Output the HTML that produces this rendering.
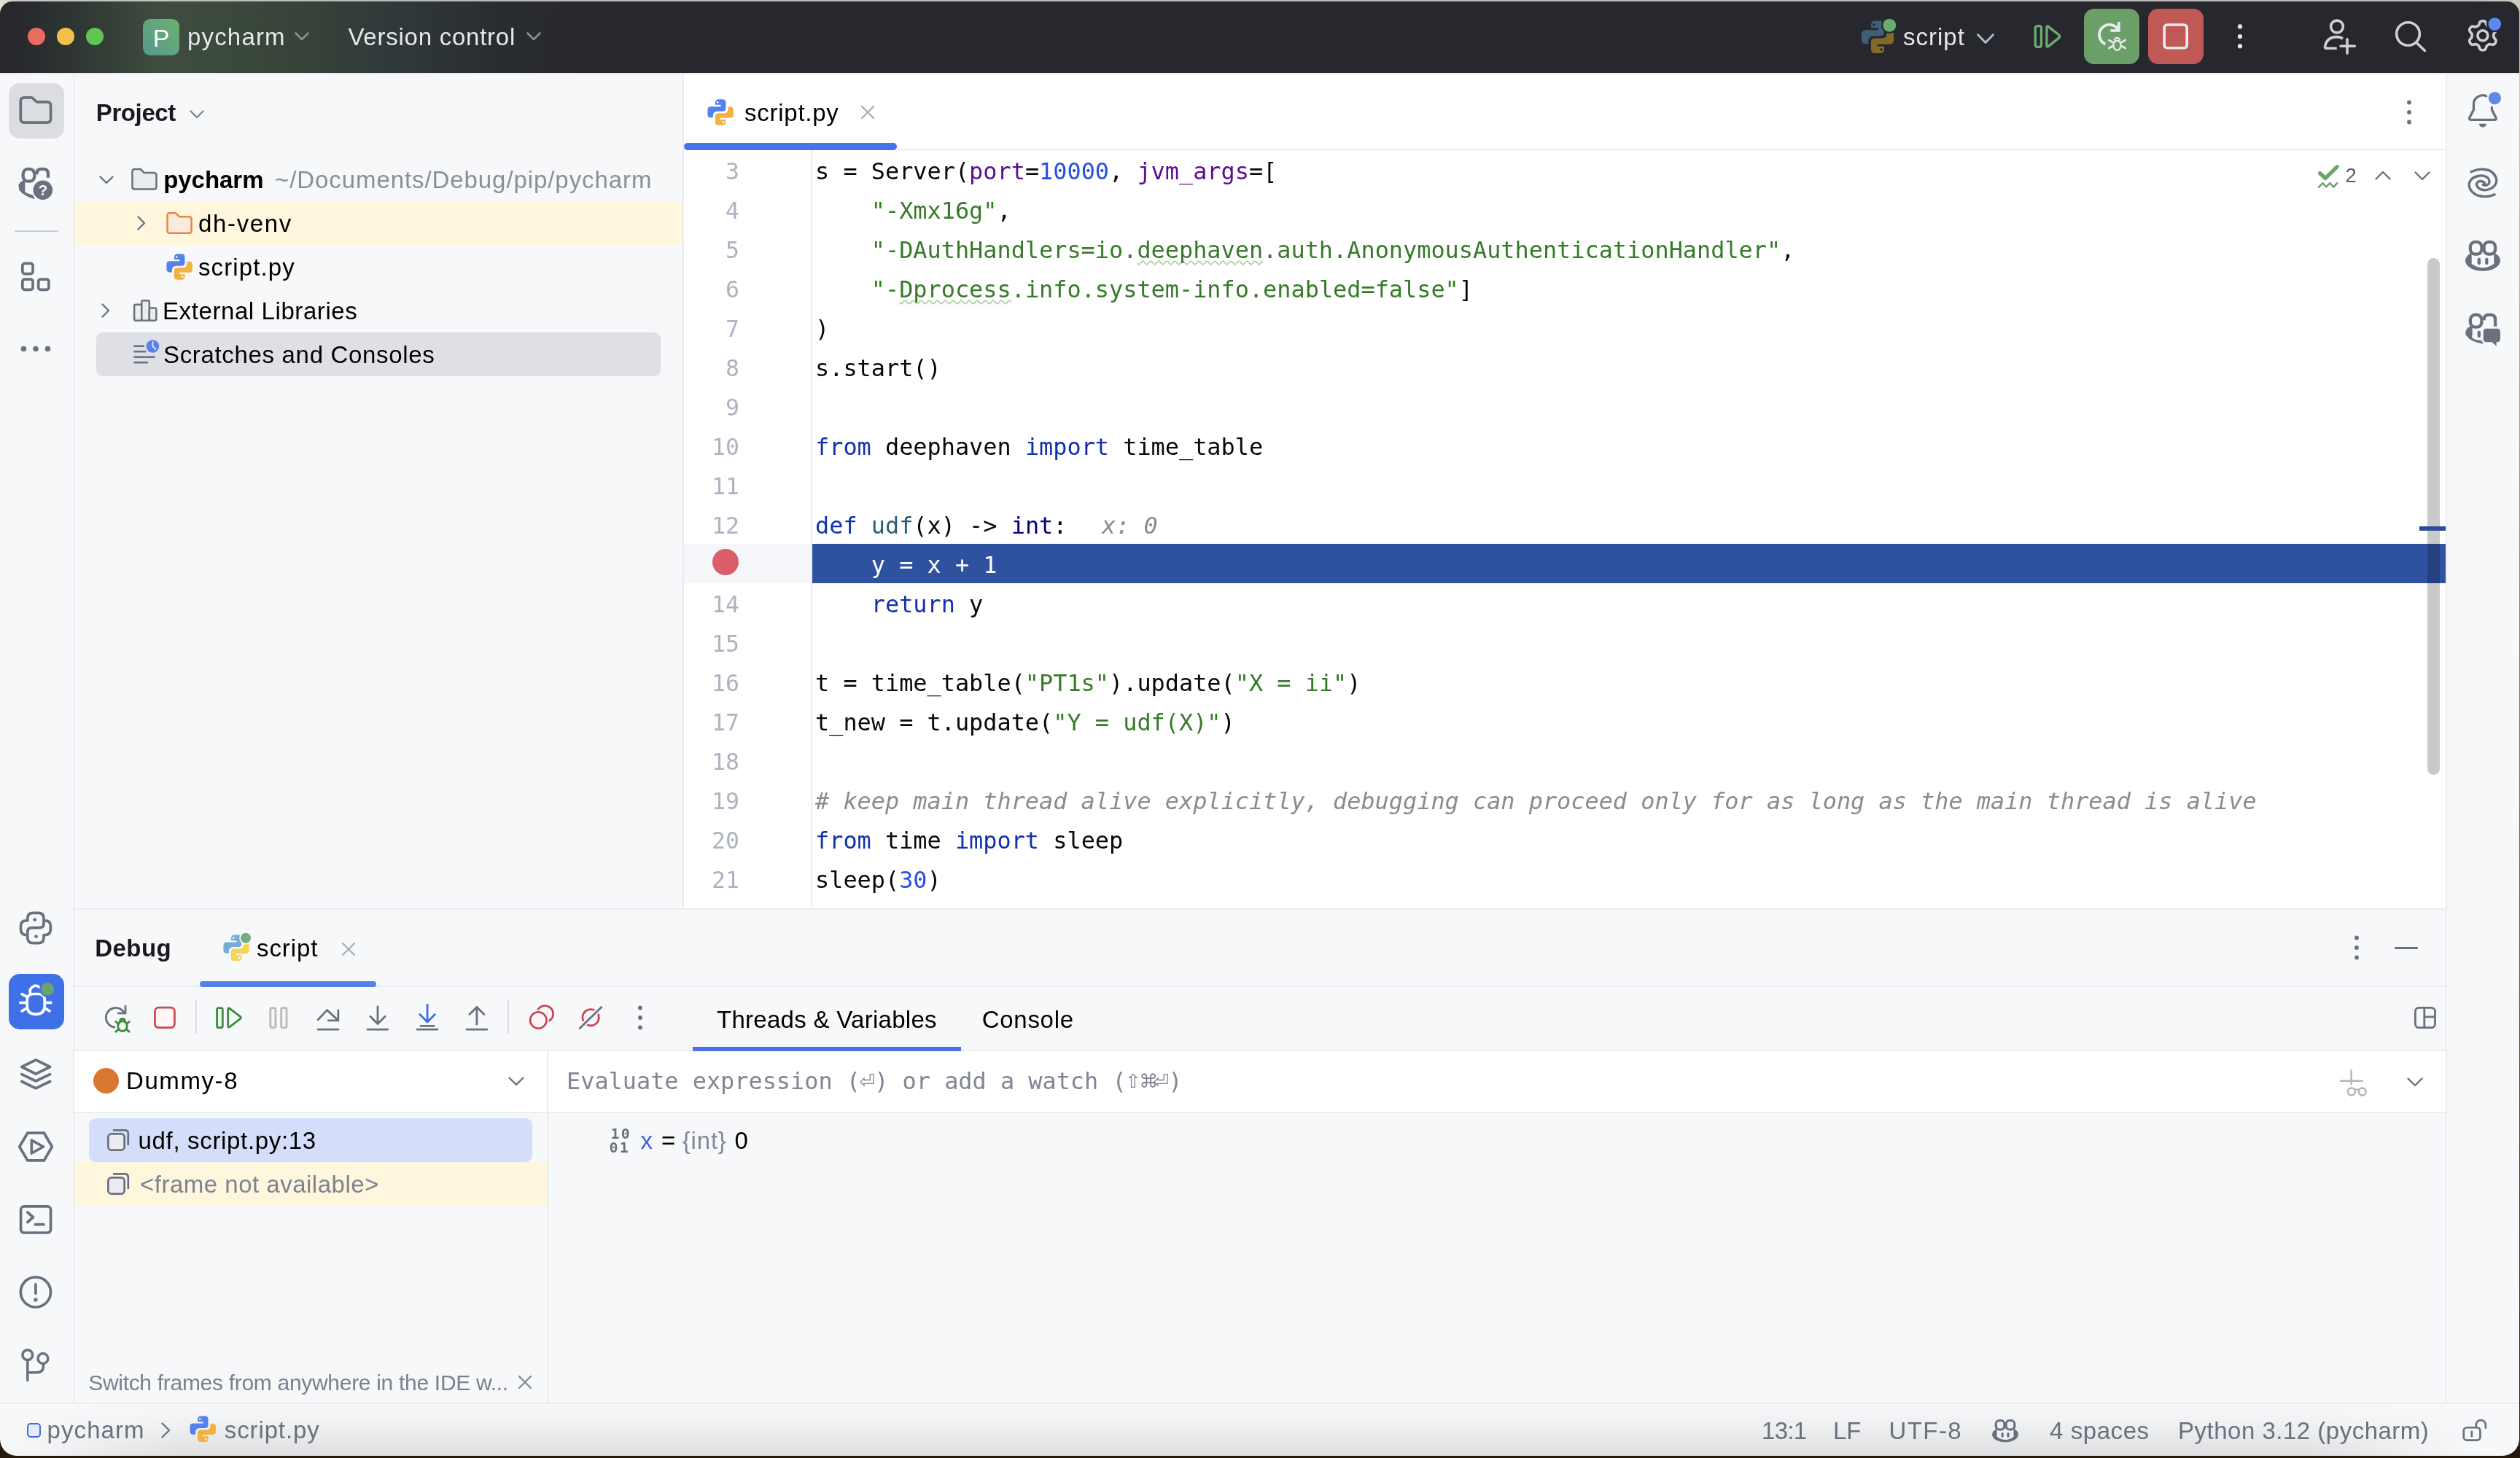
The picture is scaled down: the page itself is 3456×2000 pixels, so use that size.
<!DOCTYPE html>
<html lang="en">
<head>
<meta charset="utf-8">
<title>pycharm – script.py</title>
<style>
*{box-sizing:border-box;margin:0;padding:0}
html,body{width:3456px;height:2000px;overflow:hidden}
body{position:relative;font-family:"Liberation Sans",sans-serif;color:#000;
 background:linear-gradient(to bottom,rgba(42,29,16,0) 0,rgba(42,29,16,0) 60px,#2a1d10 1900px,#241a0e 2000px),linear-gradient(to right,#e6e4d8 0,#c6c6c4 30px,#b9b9b9 400px,#b9b9b9 3380px,#cfc8bd 3440px)}
.a{position:absolute}
.t{position:absolute;white-space:nowrap;line-height:44px;height:44px;font-size:32px;margin-top:1px}
.m{font-family:"DejaVu Sans Mono","Liberation Mono",monospace}
svg{position:absolute;overflow:visible}
#win{will-change:transform;position:absolute;left:0;top:0;width:3456px;height:2000px;background:#f7f8fa;clip-path:inset(2px 1px 3px 0 round 17px 17px 23px 23px)}
/* title bar */
#title{left:0;top:0;width:3456px;height:100px;background:linear-gradient(to right,#27282e 0,#27282e 20px,#2f3733 110px,#3e4c3f 215px,#3e4c3f 250px,#384439 400px,#30393a 540px,#2a2d30 680px,#27282e 800px,#27282e 100%)}
.hl{background:#ebecf0}
/* code */
.ln{position:absolute;left:938px;width:76px;text-align:right;color:#aeb3c2;font-size:31.5px;line-height:54px;height:54px;margin-top:2px}
.cl{position:absolute;left:1118px;white-space:pre;font-size:31.89px;line-height:54px;height:54px;color:#080808;margin-top:2px}
.k{color:#1232ac}.n{color:#284fe2}.s{color:#377b2a}.p{color:#5d0e93}.c{color:#8c8c8c;font-style:italic}.f{color:#286077}.b{color:#00007b}
.g{color:#6c707e}
.sym{font-family:"DejaVu Sans",sans-serif;display:inline-block;width:19.2px;font-size:26px;text-indent:-1.6px;vertical-align:top;letter-spacing:0}.sym i{font-style:normal;display:inline-block;width:19.2px;margin:0 -3px}
.w{text-decoration:underline wavy #b3d1ab;text-decoration-thickness:2.2px;text-underline-offset:2.5px;text-decoration-skip-ink:none}
</style>
</head>
<body>
<div id="win">
<!--TITLE-->
<div class="a" id="title"></div>
<div class="a" style="left:38px;top:38px;width:24px;height:24px;border-radius:50%;background:#ed6a5e"></div>
<div class="a" style="left:78px;top:38px;width:24px;height:24px;border-radius:50%;background:#f5bf4f"></div>
<div class="a" style="left:118px;top:38px;width:24px;height:24px;border-radius:50%;background:#61c554"></div>
<div class="a" style="left:196px;top:26px;width:50px;height:50px;border-radius:10px;background:linear-gradient(45deg,#55998d 0,#6fb06e 100%)"></div>
<span class="t" style="left:196px;width:50px;text-align:center;top:29px;color:#fff;font-size:34px">P</span>
<span class="t" id="t_pycharm" style="left:257.0px;top:28px;color:#e6e7ec;font-size:33px;letter-spacing:1.17px">pycharm</span>
<svg style="left:404px;top:44px" width="20" height="12" viewBox="0 0 20 12"><path d="M1.5 1.5 L10 10 L18.5 1.5" fill="none" stroke="#8b8e9c" stroke-width="2.6" stroke-linecap="round" stroke-linejoin="round"/></svg>
<span class="t" id="t_vc" style="left:477.4px;top:28px;color:#e6e7ec;font-size:33px;letter-spacing:0.76px">Version control</span>
<svg style="left:722px;top:44px" width="20" height="12" viewBox="0 0 20 12"><path d="M1.5 1.5 L10 10 L18.5 1.5" fill="none" stroke="#8b8e9c" stroke-width="2.6" stroke-linecap="round" stroke-linejoin="round"/></svg>
<span class="t" id="t_runcfg" style="left:2610.0px;top:28px;color:#e6e7ec;font-size:33px;letter-spacing:1.00px">script</span>
<svg style="left:2711px;top:46px" width="24" height="15" viewBox="0 0 24 15"><path d="M1.5 1.5 L12 12.5 L22.5 1.5" fill="none" stroke="#b6bac5" stroke-width="2.9" stroke-linecap="round" stroke-linejoin="round"/></svg>
<div class="a" style="left:2858px;top:12px;width:76px;height:76px;border-radius:14px;background:#6a9f68"></div>
<div class="a" style="left:2946px;top:12px;width:76px;height:76px;border-radius:14px;background:#c05856"></div>
<!--TITLEICONS-->
<!--LEFTBAR-->
<div class="a hl" style="left:0;top:100px;width:3456px;height:2px;background:#ebecf0"></div>
<div class="a hl" style="left:100px;top:102px;width:2px;height:1824px"></div>
<div class="a" style="left:12px;top:114px;width:76px;height:76px;border-radius:15px;background:#dcdde1"></div>
<div class="a" style="left:20px;top:316px;width:60px;height:2px;background:#c9ccd6"></div>
<div class="a" style="left:12px;top:1336px;width:76px;height:76px;border-radius:15px;background:#4070e8"></div>
<!--LEFTICONS-->
<!--PROJECT-->
<span class="t" id="t_project" style="left:131.8px;top:132px;font-weight:bold;font-size:33px;color:#18191c;letter-spacing:-0.40px">Project</span>
<svg style="left:260px;top:151px" width="20" height="12" viewBox="0 0 20 12"><path d="M1.5 1.5 L10 10 L18.5 1.5" fill="none" stroke="#818594" stroke-width="2.4" stroke-linecap="round" stroke-linejoin="round"/></svg>
<div class="a" style="left:102px;top:276px;width:835px;height:60px;background:#fff6de"></div>
<div class="a" style="left:132px;top:456px;width:774px;height:60px;border-radius:9px;background:#dfe0e5"></div>
<svg style="left:136px;top:241px" width="20" height="12" viewBox="0 0 20 12"><path d="M1.5 1.5 L10 10 L18.5 1.5" fill="none" stroke="#6c707e" stroke-width="2.4" stroke-linecap="round" stroke-linejoin="round"/></svg>
<svg style="left:188px;top:296px" width="12" height="20" viewBox="0 0 12 20"><path d="M1.5 1.5 L10 10 L1.5 18.5" fill="none" stroke="#6c707e" stroke-width="2.4" stroke-linecap="round" stroke-linejoin="round"/></svg>
<svg style="left:139px;top:416px" width="12" height="20" viewBox="0 0 12 20"><path d="M1.5 1.5 L10 10 L1.5 18.5" fill="none" stroke="#6c707e" stroke-width="2.4" stroke-linecap="round" stroke-linejoin="round"/></svg>
<span class="t" id="t_root" style="left:224.2px;top:224px;font-weight:bold;font-size:33px;letter-spacing:-0.04px">pycharm</span>
<span class="t" id="t_path" style="left:377.0px;top:224px;font-size:33px;color:#8a8e9b;letter-spacing:0.92px">~/Documents/Debug/pip/pycharm</span>
<span class="t" id="t_venv" style="left:272.0px;top:284px;font-size:33px;letter-spacing:1.66px">dh-venv</span>
<span class="t" id="t_scriptpy" style="left:272.0px;top:344px;font-size:33px;letter-spacing:1.12px">script.py</span>
<span class="t" id="t_extlib" style="left:223.0px;top:404px;font-size:33px;letter-spacing:0.59px">External Libraries</span>
<span class="t" id="t_scratch" style="left:224.0px;top:464px;font-size:33px;letter-spacing:0.67px">Scratches and Consoles</span>
<div class="a hl" style="left:936px;top:102px;width:2px;height:1145px"></div>
<!--PROJICONS-->
<!--EDITOR-->
<div class="a" style="left:938px;top:102px;width:2417px;height:1144px;background:#fff"></div>
<div class="a hl" style="left:938px;top:204px;width:2417px;height:2px"></div>
<div class="a" style="left:938px;top:196px;width:292px;height:10px;border-radius:5px;background:#4673e8"></div>
<span class="t" id="t_tab" style="left:1021.0px;top:132px;font-size:33px;letter-spacing:0.75px">script.py</span>
<svg style="left:1181px;top:145px" width="18" height="18" viewBox="0 0 18 18"><path d="M1 1 L17 17 M17 1 L1 17" fill="none" stroke="#a8adbd" stroke-width="2.4" stroke-linecap="round"/></svg>
<div class="a" style="left:938px;top:746px;width:175px;height:54px;background:#f6f7fb"></div>
<div class="a" style="left:1114px;top:746px;width:2241px;height:54px;background:#2f52a0"></div>
<div class="a hl" style="left:1112px;top:206px;width:2px;height:1040px"></div>
<div class="a" style="left:977px;top:753px;width:36px;height:36px;border-radius:50%;background:#da5d68"></div>
<span class="ln m" style="top:206px">3</span>
<span class="cl m" style="top:206px">s = Server(<span class="p">port</span>=<span class="n">10000</span>, <span class="p">jvm_args</span>=[</span>
<span class="ln m" style="top:260px">4</span>
<span class="cl m" style="top:260px">    <span class="s">"-Xmx16g"</span>,</span>
<span class="ln m" style="top:314px">5</span>
<span class="cl m" style="top:314px">    <span class="s">"-DAuthHandlers=io.<span class="w">deephaven</span>.auth.AnonymousAuthenticationHandler"</span>,</span>
<span class="ln m" style="top:368px">6</span>
<span class="cl m" style="top:368px">    <span class="s">"-<span class="w">Dprocess</span>.info.system-info.enabled=false"</span>]</span>
<span class="ln m" style="top:422px">7</span>
<span class="cl m" style="top:422px">)</span>
<span class="ln m" style="top:476px">8</span>
<span class="cl m" style="top:476px">s.start()</span>
<span class="ln m" style="top:530px">9</span>
<span class="ln m" style="top:584px">10</span>
<span class="cl m" style="top:584px"><span class="k">from</span> deephaven <span class="k">import</span> time_table</span>
<span class="ln m" style="top:638px">11</span>
<span class="ln m" style="top:692px">12</span>
<span class="cl m" style="top:692px"><span class="k">def</span> <span class="f">udf</span>(x) -&gt; <span class="b">int</span>:</span>
<span class="cl m" style="top:746px;color:#fff">    y = x + 1</span>
<span class="ln m" style="top:800px">14</span>
<span class="cl m" style="top:800px">    <span class="k">return</span> y</span>
<span class="ln m" style="top:854px">15</span>
<span class="ln m" style="top:908px">16</span>
<span class="cl m" style="top:908px">t = time_table(<span class="s">"PT1s"</span>).update(<span class="s">"X = ii"</span>)</span>
<span class="ln m" style="top:962px">17</span>
<span class="cl m" style="top:962px">t_new = t.update(<span class="s">"Y = udf(X)"</span>)</span>
<span class="ln m" style="top:1016px">18</span>
<span class="ln m" style="top:1070px">19</span>
<span class="cl m" style="top:1070px"><span class="c"># keep main thread alive explicitly, debugging can proceed only for as long as the main thread is alive</span></span>
<span class="ln m" style="top:1124px">20</span>
<span class="cl m" style="top:1124px"><span class="k">from</span> time <span class="k">import</span> sleep</span>
<span class="ln m" style="top:1178px">21</span>
<span class="cl m" style="top:1178px">sleep(<span class="n">30</span>)</span>
<span class="cl m c" style="left:1511px;top:692px;color:#8c8c8c">x: 0</span>
<div class="a" style="left:3329px;top:354px;width:17px;height:709px;border-radius:9px;background:rgba(0,0,0,.21)"></div>
<div class="a" style="left:3318px;top:722px;width:37px;height:6px;background:#2d4b9b"></div>
<span class="t" id="t_insp" style="left:3216.5px;top:217.5px;font-size:27.5px;color:#5a5d63">2</span>
<svg style="left:3257px;top:234px" width="22" height="13" viewBox="0 0 22 13"><path d="M1.5 11.5 L11 2 L20.5 11.5" fill="none" stroke="#6c707e" stroke-width="2.4" stroke-linecap="round" stroke-linejoin="round"/></svg>
<svg style="left:3311px;top:235px" width="22" height="13" viewBox="0 0 22 13"><path d="M1.5 1.5 L11 11 L20.5 1.5" fill="none" stroke="#6c707e" stroke-width="2.4" stroke-linecap="round" stroke-linejoin="round"/></svg>
<svg style="left:3299px;top:135px" width="10" height="38" viewBox="0 0 10 38"><circle cx="5" cy="5.5" r="2.9" fill="#6c707e"/><circle cx="5" cy="19" r="2.9" fill="#6c707e"/><circle cx="5" cy="32.5" r="2.9" fill="#6c707e"/></svg>
<!--EDICONS-->
<!--RIGHTBAR-->
<div class="a hl" style="left:3354px;top:102px;width:2px;height:1824px"></div>
<!--RIGHTICONS-->
<!--DEBUG-->
<div class="a hl" style="left:102px;top:1246px;width:3252px;height:2px"></div>
<span class="t" id="t_debug" style="left:130.2px;top:1278px;font-weight:bold;font-size:33px;color:#18191c;letter-spacing:0.45px">Debug</span>
<span class="t" id="t_dscript" style="left:352.0px;top:1278px;font-size:33px;letter-spacing:0.92px">script</span>
<svg style="left:469px;top:1293px" width="18" height="18" viewBox="0 0 18 18"><path d="M1 1 L17 17 M17 1 L1 17" fill="none" stroke="#a8adbd" stroke-width="2.4" stroke-linecap="round"/></svg>
<div class="a hl" style="left:102px;top:1352px;width:3252px;height:2px"></div>
<div class="a" style="left:274px;top:1346px;width:242px;height:8px;border-radius:4px;background:#5580e6"></div>
<div class="a hl" style="left:102px;top:1440px;width:3252px;height:2px"></div>
<div class="a" style="left:268px;top:1372px;width:2px;height:46px;background:#dcdde2"></div>
<div class="a" style="left:696px;top:1372px;width:2px;height:46px;background:#dcdde2"></div>
<span class="t" id="t_tv" style="left:983.0px;top:1376px;font-size:33px;letter-spacing:0.28px">Threads &amp; Variables</span>
<span class="t" id="t_console" style="left:1346.8px;top:1376px;font-size:33px;letter-spacing:0.69px">Console</span>
<div class="a" style="left:950px;top:1436px;width:368px;height:6px;background:#4872e6"></div>
<div class="a" style="left:102px;top:1442px;width:3252px;height:83px;background:#fff"></div>
<div class="a hl" style="left:102px;top:1525px;width:3252px;height:2px"></div>
<div class="a hl" style="left:750px;top:1442px;width:2px;height:484px"></div>
<div class="a" style="left:128px;top:1465px;width:35px;height:35px;border-radius:50%;background:#d97630"></div>
<span class="t" id="t_dummy" style="left:173.0px;top:1460px;font-size:33px;letter-spacing:1.58px">Dummy-8</span>
<svg style="left:697px;top:1477px" width="22" height="13" viewBox="0 0 22 13"><path d="M1.5 1.5 L11 11 L20.5 1.5" fill="none" stroke="#6c707e" stroke-width="2.4" stroke-linecap="round" stroke-linejoin="round"/></svg>
<span class="t m" id="t_eval" style="left:777px;top:1460px;font-size:31.89px;color:#818594;white-space:pre">Evaluate expression (<span class="sym">&#x23CE;</span>) or add a watch (<span class="sym">&#x21E7;</span><span class="sym">&#x2318;</span><span class="sym">&#x23CE;</span>)</span>
<svg style="left:3301px;top:1478px" width="22" height="13" viewBox="0 0 22 13"><path d="M1.5 1.5 L11 11 L20.5 1.5" fill="none" stroke="#6c707e" stroke-width="2.4" stroke-linecap="round" stroke-linejoin="round"/></svg>
<div class="a" style="left:122px;top:1534px;width:608px;height:60px;border-radius:9px;background:#d4defb"></div>
<div class="a" style="left:102px;top:1594px;width:648px;height:60px;background:#fff6de"></div>
<span class="t" id="t_udf" style="left:189.6px;top:1542px;font-size:33px;letter-spacing:0.66px">udf, script.py:13</span>
<span class="t" id="t_fna" style="left:192.0px;top:1602px;font-size:33px;color:#7f8390;letter-spacing:0.50px">&lt;frame not available&gt;</span>
<span class="t" id="t_vx" style="left:878.6px;top:1542px;font-size:33px;color:#3b66d8;letter-spacing:-3.80px">x</span><span class="t" id="t_veq" style="left:907.0px;top:1542px;font-size:33px;letter-spacing:-8.00px">=</span><span class="t" id="t_vint" style="left:935.8px;top:1542px;font-size:33px;color:#848899;letter-spacing:0.80px">{int}</span><span class="t" id="t_v0" style="left:1007.4px;top:1542px;font-size:33px;letter-spacing:-0.60px">0</span><span class="t" style="left:837.5px;top:1543.5px;font-size:20px;font-family:'DejaVu Sans Mono',monospace;font-weight:bold;color:#6c707e;letter-spacing:2.2px;line-height:20px;height:20px">10</span><span class="t" style="left:835.5px;top:1563px;font-size:20px;font-family:'DejaVu Sans Mono',monospace;font-weight:bold;color:#6c707e;letter-spacing:2.2px;line-height:20px;height:20px">01</span>
<span class="t" id="t_switch" style="left:121.2px;top:1874px;font-size:30px;color:#7b7f8e;letter-spacing:-0.30px">Switch frames from anywhere in the IDE w...</span>
<svg style="left:711px;top:1887px" width="18" height="18" viewBox="0 0 18 18"><path d="M1 1 L17 17 M17 1 L1 17" fill="none" stroke="#818594" stroke-width="2.2" stroke-linecap="round"/></svg>
<svg style="left:3227px;top:1281px" width="10" height="38" viewBox="0 0 10 38"><circle cx="5" cy="5.5" r="2.9" fill="#6c707e"/><circle cx="5" cy="19" r="2.9" fill="#6c707e"/><circle cx="5" cy="32.5" r="2.9" fill="#6c707e"/></svg>
<div class="a" style="left:3284px;top:1299px;width:32px;height:2.5px;border-radius:1px;background:#6c707e"></div>
<svg style="left:873px;top:1377px" width="10" height="38" viewBox="0 0 10 38"><circle cx="5" cy="5.5" r="2.9" fill="#6c707e"/><circle cx="5" cy="19" r="2.9" fill="#6c707e"/><circle cx="5" cy="32.5" r="2.9" fill="#6c707e"/></svg>
<!--DBGICONS-->
<!--STATUS-->
<div class="a" style="left:0;top:1926px;width:3456px;height:72px;background:linear-gradient(to bottom,rgba(0,0,0,0) 0,rgba(0,0,0,.03) 40%,rgba(0,0,0,.1) 100%);-webkit-mask-image:linear-gradient(to right,transparent 0,#000 260px,#000 3150px,transparent 3400px);mask-image:linear-gradient(to right,transparent 0,#000 260px,#000 3150px,transparent 3400px)"></div>
<div class="a hl" style="left:0;top:1924px;width:3456px;height:2px"></div>
<div class="a" style="left:37px;top:1952px;width:19px;height:20px;border-radius:5px;border:2.5px solid #3b6be8;background:#e6ecfc"></div>
<span class="t" id="t_sb1" style="left:64.6px;top:1939px;font-size:33px;color:#6c707e;letter-spacing:1.06px">pycharm</span>
<svg style="left:221px;top:1951px" width="13" height="22" viewBox="0 0 13 22"><path d="M1.5 1.5 L11 11 L1.5 20.5" fill="none" stroke="#6c707e" stroke-width="2.4" stroke-linecap="round" stroke-linejoin="round"/></svg>
<span class="t" id="t_sb2" style="left:307.8px;top:1939px;font-size:33px;color:#6c707e;letter-spacing:0.88px">script.py</span>
<span class="t" id="t_sb3" style="left:2416.0px;top:1940px;font-size:33px;color:#6c707e;letter-spacing:-0.72px">13:1</span>
<span class="t" id="t_sb4" style="left:2514.0px;top:1940px;font-size:33px;color:#6c707e;letter-spacing:0.00px">LF</span>
<span class="t" id="t_sb5" style="left:2590.6px;top:1940px;font-size:33px;color:#6c707e;letter-spacing:1.39px">UTF-8</span>
<span class="t" id="t_sb6" style="left:2811.0px;top:1940px;font-size:33px;color:#6c707e;letter-spacing:0.57px">4 spaces</span>
<span class="t" id="t_sb7" style="left:2987.0px;top:1940px;font-size:33px;color:#6c707e;letter-spacing:0.50px">Python 3.12 (pycharm)</span>
<!--STICONS-->
<!--ICONS-START-->
<svg style="left:0;top:0" width="3456" height="2000" viewBox="0 0 3456 2000">
<defs>
<path id="pyh" fill-rule="evenodd" d="M10.6 7.7V4.6Q10.6 0 15.2 0H20.6Q25.2 0 25.2 4.6V12.2Q25.2 16.6 20.8 16.6H13.6Q7.5 16.6 7.5 22.7V25.3H4.5Q0 25.3 0 20.8V14.5Q0 10 4.5 10H17.4A1.15 1.15 0 0 0 17.4 7.7ZM12.45 4.1a1.4 1.4 0 1 0 2.8 0a1.4 1.4 0 1 0 -2.8 0Z"/>
<path id="fold" d="M1.25 4.6Q1.25 1.25 4.6 1.25H11.6Q12.6 1.25 13.3 1.95L17.5 6.2H30.9Q34.25 6.2 34.25 9.5V25.4Q34.25 28.75 30.9 28.75H4.6Q1.25 28.75 1.25 25.4Z"/>
<g id="cop">
<ellipse cx="24" cy="27.8" rx="24" ry="14.2" fill="currentColor"/>
<path d="M8.7 14H39.3V32.2Q24 42.6 8.7 32.2Z" fill="var(--bg,#f7f8fa)"/>
<rect x="6.85" y="2.15" width="15.65" height="16.7" rx="6.4" ry="6.8" fill="var(--bg,#f7f8fa)" stroke="currentColor" stroke-width="4.3"/>
<rect x="25.5" y="2.15" width="15.65" height="16.7" rx="6.4" ry="6.8" fill="var(--bg,#f7f8fa)" stroke="currentColor" stroke-width="4.3"/>
<path d="M18.8 26.2V31.2M29.3 26.2V31.2" stroke="currentColor" stroke-width="4.3" stroke-linecap="round" fill="none"/>
</g>
</defs>
<g transform="translate(970.4 136.2) scale(0.9944)"><use href="#pyh" fill="#5581ed"/><use href="#pyh" fill="#f2b143" transform="rotate(180 17.85 17.85)"/></g>
<g transform="translate(228.4 348.3) scale(0.9944)"><use href="#pyh" fill="#5581ed"/><use href="#pyh" fill="#f2b143" transform="rotate(180 17.85 17.85)"/></g>
<g transform="translate(260.5 1942.5) scale(0.9944)"><use href="#pyh" fill="#5581ed"/><use href="#pyh" fill="#f2b143" transform="rotate(180 17.85 17.85)"/></g>
<g transform="translate(2552.9 28.8) scale(1.2409)"><use href="#pyh" fill="#3e5f76"/><use href="#pyh" fill="#826a28" transform="rotate(180 17.85 17.85)"/></g>
<circle cx="2591.3" cy="34.7" r="11.2" fill="#27282e"/><circle cx="2591.3" cy="34.7" r="9" fill="#6aaa73"/>
<g transform="translate(306.4 1282.5) scale(0.9944)"><use href="#pyh" fill="#76acd4"/><use href="#pyh" fill="#f7d452" transform="rotate(180 17.85 17.85)"/></g>
<circle cx="337" cy="1286.8" r="8.8" fill="#f7f8fa"/><circle cx="337" cy="1286.8" r="7" fill="#74ad7e"/>
<use href="#fold" transform="translate(180.2 230.8)" fill="#ebecf0" stroke="#6c707e" stroke-width="2.5" stroke-linejoin="round"/>
<use href="#fold" transform="translate(228.3 291)" fill="#fbebdd" stroke="#e3894a" stroke-width="2.5" stroke-linejoin="round"/>
<g fill="#ebecf0" stroke="#6c707e" stroke-width="2.5" stroke-linejoin="round"><rect x="184.15" y="417.7" width="10.1" height="22.1" rx="2.2"/><rect x="194.25" y="412.25" width="10.6" height="27.55" rx="2.2"/><rect x="204.85" y="422.6" width="9.5" height="17.2" rx="2.2"/></g>
<path d="M184.3 474.8H197M184.3 482.3H199.5M184.3 489.7H211.7M184.3 497.2H202" stroke="#6c707e" stroke-width="2.4" stroke-linecap="round" fill="none"/>
<circle cx="209.4" cy="475" r="10.2" fill="#dfe0e5"/><circle cx="209.4" cy="475" r="8.75" fill="#5582ee"/><path d="M209.4 469.3V475L213.3 478.9" stroke="#e4e6ee" stroke-width="2" stroke-linecap="round" stroke-linejoin="round" fill="none"/>
<path d="M28.25 139Q28.25 133.85 33.4 133.85H42.3Q43.6 133.85 44.6 134.7L50.6 139.9H64.4Q69.55 139.9 69.55 145V163Q69.55 168.15 64.4 168.15H33.4Q28.25 168.15 28.25 163Z" fill="none" stroke="#6c707e" stroke-width="3.7" stroke-linejoin="round"/>
<g transform="translate(24.8 229.8)" style="color:#6c707e"><path d="M0.3 25.5Q1.2 20.5 6.2 18.2L9.5 18V37.5Q15 41.5 23 43.2L20 37.6Q13 36 9.3 33.5" fill="currentColor"/><path d="M2 25Q0 29 2 31.5Q8 39.5 23 43.2L20.5 38Q12 36.5 9.3 33.5V19Z" fill="currentColor"/><rect x="6.85" y="2.15" width="15.65" height="16.7" rx="6.4" ry="6.8" fill="#f7f8fa" stroke="currentColor" stroke-width="4.3"/><path d="M25.6 9.5V8.6Q25.6 2.15 32 2.15H34.7Q41.1 2.15 41.1 8.6V14" fill="none" stroke="currentColor" stroke-width="4.3"/><circle cx="34" cy="30.9" r="15.3" fill="#f7f8fa"/><circle cx="34" cy="30.9" r="13.3" fill="currentColor"/><text x="34" y="38.3" text-anchor="middle" font-family="Liberation Sans,sans-serif" font-weight="bold" font-size="21" fill="#f7f8fa">?</text></g>
<g fill="none" stroke="#6c707e" stroke-width="3.7"><rect x="30.85" y="361.4" width="14.2" height="14.2" rx="3"/><rect x="30.85" y="383.2" width="14.2" height="14.2" rx="3"/><rect x="52.7" y="383.2" width="14.2" height="14.2" rx="3"/></g>
<g fill="#6c707e"><circle cx="32.4" cy="478.5" r="3.8"/><circle cx="49" cy="478.5" r="3.8"/><circle cx="65.5" cy="478.5" r="3.8"/></g>
<path d="M37.8 1262.8V1259.8Q37.8 1252.3 45.3 1252.3H52.5Q60 1252.3 60 1259.8V1262.8H61.8Q69.3 1262.8 69.3 1270.3V1275.1Q69.3 1282.6 61.8 1282.6H60V1286.2Q60 1293.7 52.5 1293.7H45.3Q37.8 1293.7 37.8 1286.2V1282.6H36Q28.5 1282.6 28.5 1275.1V1270.3Q28.5 1262.8 36 1262.8ZM37.8 1282.6V1278.5Q37.8 1272.6 43.7 1272.6H54.1Q60 1272.6 60 1266.7V1262.8" fill="none" stroke="#6c707e" stroke-width="3.7" stroke-linejoin="round"/><circle cx="47.7" cy="1261.6" r="2.4" fill="#6c707e"/><circle cx="49.6" cy="1284.6" r="2.4" fill="#6c707e"/>
<g fill="none" stroke="#fff" stroke-width="3.7" stroke-linecap="round"><path d="M37.15 1372Q37.15 1363.5 45.6 1363.5H52.8Q61.25 1363.5 61.25 1372V1379.2Q61.25 1391.25 49.2 1391.25Q37.15 1391.25 37.15 1379.2Z"/><path d="M41.5 1362A7.6 7.6 0 0 1 53.5 1354"/><path d="M30.1 1363.7L36.5 1367.2M27.9 1375.4H35.3M30.1 1386.9L36.5 1383.2M63.1 1375.4H69.8M61.9 1383.2L68 1386.9"/></g>
<circle cx="65.2" cy="1356.7" r="11" fill="#4070e8"/><circle cx="65.2" cy="1356.7" r="8.9" fill="#69a46e"/>
<path d="M29.8 1463.5L49.1 1453.8L68.6 1463.5L49.1 1473.1ZM29.8 1473.6L49.1 1483L68.6 1473.6M29.8 1483.5L49.1 1492.8L68.6 1483.5" fill="none" stroke="#6c707e" stroke-width="3.7" stroke-linejoin="round" stroke-linecap="round"/>
<path d="M26.7 1573L37.8 1554.2H60.4L71.4 1573L60.4 1591.9H37.8ZM43.3 1564.1L59.4 1573L43.3 1582Z" fill="none" stroke="#6c707e" stroke-width="3.7" stroke-linejoin="round"/>
<rect x="28.55" y="1654.9" width="41" height="36.1" rx="4.5" fill="none" stroke="#6c707e" stroke-width="3.7"/><path d="M37.8 1663L45.5 1669.7L37.8 1676.5M48.4 1679.7H59.9" fill="none" stroke="#6c707e" stroke-width="3.7" stroke-linecap="round" stroke-linejoin="round"/>
<circle cx="48.9" cy="1772.4" r="20.6" fill="none" stroke="#6c707e" stroke-width="3.7"/><path d="M48.9 1761.8V1774.3" stroke="#6c707e" stroke-width="3.7" stroke-linecap="round"/><circle cx="48.9" cy="1782.9" r="2.7" fill="#6c707e"/>
<g fill="none" stroke="#6c707e" stroke-width="3.5" stroke-linecap="round"><circle cx="37.8" cy="1858.7" r="6.9"/><circle cx="58.9" cy="1863.5" r="6.9"/><path d="M37.8 1866.5V1893.4M59.5 1871V1873.5Q59.5 1882.7 50.3 1882.7H38.5"/></g>
<g fill="none" stroke="#6aab73" stroke-width="3.3" stroke-linejoin="round"><rect x="2791.3" y="35.7" width="8.2" height="28.7" rx="2.5"/><path d="M2806.9 37.6Q2806.9 35 2809.2 36.4L2824 48.3Q2825.6 50 2824 51.6L2809.2 63.6Q2806.9 65 2806.9 62.4Z"/></g>
<g fill="none" stroke="#ebecf0" stroke-width="3.7" stroke-linecap="butt"><path d="M2904.3 39.6A13.95 13.95 0 1 0 2887.3 60.5"/><path d="M2905.8 30.1V42H2894.3" stroke-linejoin="miter"/><g stroke-width="2.2"><ellipse cx="2903.5" cy="62.3" rx="5.1" ry="6.6"/><path d="M2899.7 55.6A3.8 3.8 0 0 1 2907.3 55.6"/><path d="M2892.2 55L2897.8 58.2M2914.8 55L2909.2 58.2M2892.2 66.1L2897.8 62.9M2914.8 66.1L2909.2 62.9" stroke-linecap="round" stroke-width="2.6"/></g></g>
<rect x="2968.2" y="34" width="31" height="31.8" rx="4" fill="none" stroke="#ebecf0" stroke-width="3.6"/>
<g fill="#e8e9ee"><circle cx="3072" cy="36.4" r="3.1"/><circle cx="3072" cy="50" r="3.1"/><circle cx="3072" cy="63.3" r="3.1"/></g>
<g fill="none" stroke="#cfd0d6" stroke-width="3.6" stroke-linecap="butt"><circle cx="3205" cy="36.5" r="8.4"/><path d="M3213 52.8Q3209 50.6 3205 50.6Q3191 50.6 3188.5 64Q3188.3 66.3 3190.6 66.3H3204.8"/><path d="M3219 53.7V73.1M3210 63.2H3229.3" stroke-linecap="round"/></g>
<g fill="none" stroke="#cfd0d6" stroke-width="3.6" stroke-linecap="round"><circle cx="3302.5" cy="46.5" r="15.8"/><path d="M3314.2 58.8L3325.4 69.5"/></g>
<path d="M3419.7 48.7L3419.7 49.3L3419.8 50.0L3419.9 50.7L3420.2 51.4L3420.8 52.2L3421.7 53.2L3422.5 54.3L3423.0 55.3L3423.1 56.2L3422.9 57.1L3422.6 57.9L3422.2 58.7L3421.7 59.4L3421.2 60.1L3420.5 60.7L3419.7 61.1L3418.5 61.2L3417.2 61.0L3415.9 60.7L3414.9 60.6L3414.1 60.7L3413.5 60.9L3412.9 61.2L3412.3 61.5L3411.7 61.8L3411.2 62.2L3410.7 62.7L3410.2 63.3L3409.8 64.2L3409.4 65.5L3408.9 66.8L3408.2 67.7L3407.5 68.2L3406.6 68.5L3405.8 68.7L3404.9 68.7L3404.0 68.7L3403.2 68.5L3402.3 68.2L3401.6 67.7L3400.9 66.8L3400.4 65.5L3400.0 64.2L3399.6 63.3L3399.1 62.7L3398.6 62.2L3398.1 61.8L3397.5 61.5L3396.9 61.2L3396.3 60.9L3395.7 60.7L3394.9 60.6L3393.9 60.7L3392.6 61.0L3391.3 61.2L3390.1 61.1L3389.3 60.7L3388.6 60.1L3388.1 59.4L3387.6 58.7L3387.2 57.9L3386.9 57.1L3386.7 56.2L3386.8 55.3L3387.3 54.3L3388.1 53.2L3389.0 52.2L3389.6 51.4L3389.9 50.7L3390.0 50.0L3390.1 49.3L3390.1 48.7L3390.1 48.1L3390.0 47.4L3389.9 46.7L3389.6 46.0L3389.0 45.2L3388.1 44.2L3387.3 43.1L3386.8 42.1L3386.7 41.2L3386.9 40.3L3387.2 39.5L3387.6 38.7L3388.1 38.0L3388.6 37.3L3389.3 36.7L3390.1 36.3L3391.3 36.2L3392.6 36.4L3393.9 36.7L3394.9 36.8L3395.7 36.7L3396.3 36.5L3396.9 36.2L3397.5 35.9L3398.1 35.6L3398.6 35.2L3399.1 34.7L3399.6 34.1L3400.0 33.2L3400.4 31.9L3400.9 30.6L3401.6 29.7L3402.3 29.2L3403.2 28.9L3404.0 28.7L3404.9 28.7L3405.8 28.7L3406.6 28.9L3407.5 29.2L3408.2 29.7L3408.9 30.6L3409.4 31.9L3409.8 33.2L3410.2 34.1L3410.7 34.7L3411.2 35.2L3411.7 35.6L3412.3 35.9L3412.9 36.2L3413.5 36.5L3414.1 36.7L3414.9 36.8L3415.9 36.7L3417.2 36.4L3418.5 36.2L3419.7 36.3L3420.5 36.7L3421.2 37.3L3421.7 38.0L3422.2 38.7L3422.6 39.5L3422.9 40.3L3423.1 41.2L3423.0 42.1L3422.5 43.1L3421.7 44.2L3420.8 45.2L3420.2 46.0L3419.9 46.7L3419.8 47.4L3419.7 48.1Z" fill="none" stroke="#cfd0d6" stroke-width="3.6" stroke-linejoin="round"/><circle cx="3404.9" cy="48.7" r="7" fill="none" stroke="#cfd0d6" stroke-width="3.6"/>
<circle cx="3421.3" cy="33" r="11.3" fill="#27282e"/><circle cx="3421.3" cy="33" r="8.8" fill="#5a8cf0"/>
<path d="M3181.5 237.5L3189 244.7L3205.2 228.7" fill="none" stroke="#6ba76d" stroke-width="5.3" stroke-linecap="round" stroke-linejoin="round"/><path d="M3179.8 256.8L3185.3 251.1L3190.2 256.4L3195.3 251.1L3200.3 256.6L3205.5 251.1" fill="none" stroke="#6ba76d" stroke-width="2.5" stroke-linecap="round" stroke-linejoin="round"/>
<g fill="none" stroke="#6c707e" stroke-width="3.3" stroke-linecap="round" stroke-linejoin="round"><path d="M3409.6 131.7A12.5 12.5 0 0 0 3392.4 143.3V150.5L3386.8 161.5Q3385.6 164.3 3388.5 164.3H3421.3Q3424.2 164.3 3423 161.5L3417.4 150.5V147.5"/></g><path d="M3399.7 169.7H3410.1Q3409.3 174.4 3404.9 174.4Q3400.5 174.4 3399.7 169.7Z" fill="#6c707e"/>
<circle cx="3421.4" cy="134.7" r="8.6" fill="#6089ea"/>
<path d="M3389.0 235.7C3390.3 235.2 3394.4 233.4 3397.0 232.8C3399.7 232.3 3402.0 231.9 3405.1 232.2C3408.1 232.5 3412.6 232.9 3415.6 234.7C3418.5 236.4 3421.4 240.0 3422.7 242.7C3424.0 245.4 3424.0 248.3 3423.2 250.7C3422.4 253.2 3420.3 255.9 3418.0 257.5C3415.7 259.2 3412.2 260.3 3409.4 260.6C3406.6 260.9 3403.5 260.4 3401.4 259.4C3399.2 258.4 3397.3 256.0 3396.7 254.4C3396.0 252.9 3396.8 251.1 3397.7 250.1C3398.5 249.1 3400.5 248.5 3402.0 248.5C3403.5 248.5 3405.7 249.4 3406.7 250.1C3407.6 250.8 3407.7 252.0 3407.5 252.6C3407.3 253.1 3405.8 253.3 3405.4 253.5" fill="none" stroke="#6c707e" stroke-width="3.4" stroke-linecap="round"/><path d="M3421.1 266.8C3420.0 267.2 3416.9 268.6 3414.3 269.0C3411.7 269.5 3409.0 269.9 3405.7 269.5C3402.4 269.1 3397.6 268.3 3394.6 266.5C3391.5 264.8 3388.7 261.4 3387.4 258.8C3386.1 256.1 3386.0 253.1 3386.5 250.7C3387.1 248.4 3388.9 246.1 3390.9 244.6C3392.8 243.0 3395.8 242.1 3398.3 241.5C3400.7 240.9 3403.4 240.7 3405.7 241.1C3407.9 241.5 3410.5 242.7 3411.9 244.0C3413.3 245.2 3414.0 247.4 3414.1 248.9C3414.2 250.3 3413.4 251.7 3412.5 252.6C3411.6 253.5 3409.9 254.1 3408.8 254.2C3407.6 254.3 3406.0 253.6 3405.4 253.5" fill="none" stroke="#6c707e" stroke-width="3.4" stroke-linecap="round"/>
<use href="#cop" transform="translate(3381 329.8)" style="color:#6c707e"/>
<g transform="translate(3381 429.8)" style="color:#6c707e"><path d="M2 25Q0 29 2 31.5Q8 39.5 25 42L22 37.3Q12 36.5 9.3 33.5V19Z" fill="currentColor"/><path d="M0.3 25.5Q1.2 20.5 6.2 18.2L9.5 18V30H0.5Z" fill="currentColor"/><rect x="6.85" y="2.15" width="15.65" height="16.7" rx="6.4" ry="6.8" fill="#f7f8fa" stroke="currentColor" stroke-width="4.3"/><path d="M25.6 9.5V8.6Q25.6 2.15 32 2.15H34.7Q41.1 2.15 41.1 8.6V18" fill="none" stroke="currentColor" stroke-width="4.3"/><path d="M18.8 26.2V31.2" stroke="currentColor" stroke-width="4.3" stroke-linecap="round" fill="none"/><path d="M22.7 25.2Q22.7 18.9 29 18.9H44Q50 18.9 50 25.2V36Q50 41.5 44.6 41.5V47.5L37 41.5H29Q22.7 41.5 22.7 36Z" fill="#f7f8fa"/><path d="M24.7 25.2Q24.7 20.9 29 20.9H43.6Q47.9 20.9 47.9 25.2V35.2Q47.9 39.5 43.6 39.5H42.6V45L36.4 39.5H29Q24.7 39.5 24.7 35.2Z" fill="currentColor"/></g>
<g fill="none" stroke="#6c707e" stroke-width="2.8"><path d="M171.2 1391A13.4 13.4 0 1 0 158 1409.2"/><path d="M172 1379V1389.9H161"/></g>
<g fill="none" stroke="#3b8a3f" stroke-width="2.8" stroke-linecap="round"><ellipse cx="168" cy="1407.6" rx="6.3" ry="6.9" fill="#f2fcf3"/><path d="M164.6 1400.7A3.4 3.4 0 0 1 171.4 1400.7"/><path d="M158.8 1401.5L162.4 1404.5M177.2 1401.5L173.6 1404.5M158.8 1415.2L162.4 1412.3M177.2 1415.2L173.6 1412.3"/></g>
<rect x="212.4" y="1382.2" width="27" height="27.4" rx="5" fill="#fff7f7" stroke="#cb4b55" stroke-width="2.8"/>
<g fill="#f2fcf3" stroke="#3b8a3f" stroke-width="2.8" stroke-linejoin="round"><rect x="297.6" y="1382.6" width="7.7" height="27" rx="2.2"/><path d="M312.7 1384.8Q312.7 1382 315 1383.4L329.6 1394.6Q331 1396 329.6 1397.4L315 1408.6Q312.7 1410 312.7 1407.2Z"/></g>
<g fill="none" stroke="#b9b9bb" stroke-width="2.8"><rect x="370.8" y="1382.6" width="7.1" height="27" rx="2"/><rect x="385.7" y="1382.6" width="7.3" height="27" rx="2"/></g>
<g fill="none" stroke="#6c707e" stroke-width="2.8" stroke-linecap="round" stroke-linejoin="round"><path d="M436.1 1398.7L448.6 1385.6L463.8 1399.6M463.8 1386V1399.9H450.4M436 1412.1H464"/><path d="M518 1380.8V1404.6M507.9 1394.3L518 1404.6L528.1 1394.3M503.9 1412.1H531.9"/><path d="M576.9 1407.3H595M572 1412.1H600"/><path d="M653.9 1381.4V1405M643.8 1391.5L653.9 1381.4L664 1391.5M640 1412.1H668"/></g>
<path d="M586.1 1378.1V1401.9M575.7 1391.5L586.1 1401.9L596.4 1391.5" fill="none" stroke="#3a6cf0" stroke-width="2.8" stroke-linecap="round" stroke-linejoin="round"/>
<circle cx="747.4" cy="1390.7" r="11.2" fill="#fdf5f5" stroke="#c9404e" stroke-width="2.6"/><circle cx="738.3" cy="1399.5" r="14.3" fill="#f7f8fa"/><circle cx="738.3" cy="1399.5" r="11.2" fill="#fdf5f5" stroke="#c9404e" stroke-width="2.6"/>
<circle cx="810.1" cy="1395.7" r="11.2" fill="#fdf5f5" stroke="#c9404e" stroke-width="2.6"/><path d="M795.2 1410.6L824.8 1381.4" stroke="#f7f8fa" stroke-width="7" stroke-linecap="butt"/><path d="M795.2 1410.6L824.8 1381.4" stroke="#6c707e" stroke-width="2.8" stroke-linecap="round"/>
<g fill="none" stroke="#6c707e" stroke-width="2.8"><rect x="3312.4" y="1382.3" width="27.1" height="27.3" rx="5"/><path d="M3324.8 1382.3V1409.6M3324.8 1394.9H3339.5"/></g>
<g fill="none" stroke="#b4b4b6" stroke-width="2.4" stroke-linecap="butt"><path d="M3224.6 1467V1488.4M3208.9 1482.7H3240.7"/><circle cx="3224.9" cy="1497.5" r="5"/><circle cx="3239.7" cy="1497.5" r="5"/><path d="M3229.4 1495.3Q3232.3 1493.5 3235.2 1495.3"/></g>
<g fill="none" stroke="#6c707e" stroke-width="2.7" stroke-linecap="butt"><rect x="148.35" y="1555.35" width="22.3" height="22.2" rx="4.5" fill="#ebecf0"/><path d="M155 1550.3H171.3Q175.8 1550.3 175.8 1554.8V1571"/></g>
<g fill="none" stroke="#6c707e" stroke-width="2.7" stroke-linecap="butt"><rect x="148.35" y="1615.35" width="22.3" height="22.2" rx="4.5" fill="#ebecf0"/><path d="M155 1610.3H171.3Q175.8 1610.3 175.8 1614.8V1631"/></g>
<use href="#cop" transform="translate(2732.1 1946.9) scale(0.748)" style="color:#6c707e;--bg:#eff0f2"/>
<g fill="none" stroke="#6c707e" stroke-width="2.7" stroke-linecap="round"><rect x="3378.75" y="1958.25" width="22.7" height="17.4" rx="4.5"/><path d="M3389.8 1963.8V1970.2M3395.8 1957V1954.5A6.5 6.5 0 0 1 3408.8 1954.5V1958.6"/></g>
</svg>
<!--ICONS-END-->
</div>
</body>
</html>
